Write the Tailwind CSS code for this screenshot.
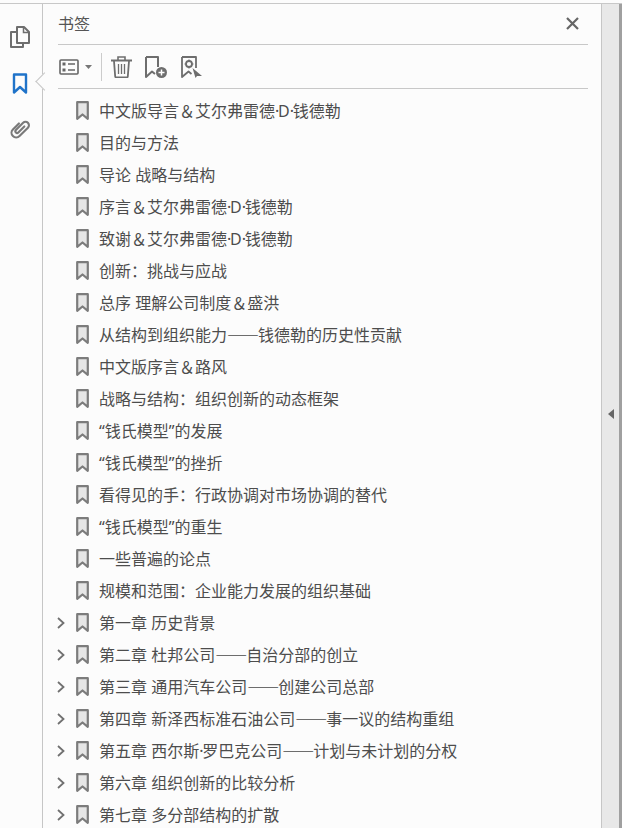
<!DOCTYPE html>
<html lang="zh-CN">
<head>
    <meta charset="UTF-8">
    <title>书签</title>
    <script src="https://cdn.jsdelivr.net/npm/@tailwindcss/browser@4"></script>
</head>
<body class="bg-[#fcfcfc] font-['Noto_Sans','Noto_Sans_CJK_SC',sans-serif] text-[#4d4d4d]">
    <div class="flex h-[828px] w-[622px] overflow-hidden pt-[3px]">
        <div class="flex w-full border-t border-[#c8c8c8]">
            <!-- left rail -->
            <div class="relative flex w-[43px] shrink-0 flex-col items-center border-r border-[#c6c6c6] pt-[21px] pr-[3px]">
                <svg class="h-[24px] w-[22px]" viewBox="0 0 22 24" fill="none" stroke="#6e6e6e" stroke-width="2">
                    <path d="M8 2h7l5 5v11H8z" stroke-linejoin="round"/>
                    <path d="M14.5 2v5.5H20" stroke-width="1.5"/>
                    <path d="M8 7H2v15h12v-4" stroke-linejoin="round"/>
                </svg>
                <svg class="mt-[24px] h-[22px] w-[16px]" viewBox="0 0 16 22" fill="none" stroke="#1f73c9" stroke-width="2.4">
                    <path d="M2 1.500h12v18l-6-5.500-6 5.500z" stroke-linejoin="round"/>
                </svg>
                <svg class="mt-[22px] h-[24px] w-[22px]" viewBox="0 0 22 24" fill="none" stroke="#7a7a7a" stroke-width="2.500" stroke-linecap="round">
                    <path transform="translate(11 12) rotate(45) scale(.85) translate(1.500 -.7)" d="M0-5V5a2 2 0 0 1-4 0V-7a4 4 0 0 1 8 0V7a5.500 5.500 0 0 1-11 0V-3"/>
                </svg>
                <!-- pointer of the active tab -->
                <div class="absolute top-[71px] right-[-9px] h-[13px] w-[13px] rotate-45 border-b border-l border-[#c6c6c6] bg-[#fcfcfc]"></div>
            </div>

            <!-- bookmarks panel -->
            <div class="flex min-w-0 flex-1 flex-col">
                <div class="mr-[13px] ml-[15px] flex h-[41px] shrink-0 items-center justify-between border-b border-[#c8c8c8]">
                    <span class="text-[16px] leading-[24px] text-[#555555]">书签</span>
                    <svg class="mr-[9px] mb-[2px] h-[13px] w-[13px]" viewBox="0 0 13 13" stroke="#666666" stroke-width="2.200">
                        <path d="M1 1l11 11M12 1L1 12"/>
                    </svg>
                </div>

                <div class="mr-[13px] ml-[15px] flex h-[44px] shrink-0 items-center border-b border-[#c8c8c8] pl-px">
                    <svg class="h-[16px] w-[20px]" viewBox="0 0 20 16" fill="none" stroke="#666666" stroke-width="1.600">
                        <rect x="1" y="1" width="18" height="14" rx="1"/>
                        <rect x="3.500" y="3.500" width="3" height="3" fill="#666666" stroke="none"/>
                        <rect x="3.500" y="9.500" width="3" height="3" fill="#666666" stroke="none"/>
                        <path d="M9 5h7M9 11h7"/>
                    </svg>
                    <svg class="ml-[6px] h-[4px] w-[7px]" viewBox="0 0 7 4" fill="#777777"><path d="M0 0h7L3.500 4z"/></svg>
                    <div class="mx-[9px] h-[28px] w-px bg-[#cccccc]"></div>
                    <svg class="h-[22px] w-[21px]" viewBox="0 0 21 22" fill="none" stroke="#6e6e6e" stroke-width="1.600">
                        <path d="M0 4.500h21" stroke-width="2"/>
                        <path d="M7 4V1h7V4"/>
                        <path d="M3 5l1.200 15.500q.1 1 1 1h10.600q.9 0 1-1L18 5" stroke-width="1.800"/>
                        <path d="M7.500 8v10M10.500 8v10M13.500 8v10" stroke-width="1.300"/>
                    </svg>
                    <svg class="ml-[13px] h-[22px] w-[22px]" viewBox="0 0 22 22" fill="none" stroke="#6e6e6e" stroke-width="2">
                        <path d="M1 1h12v10M1 1v20l6-5.500 3 2.500" stroke-linejoin="round"/>
                        <circle cx="16.500" cy="16.500" r="5.500" fill="#6e6e6e" stroke="none"/>
                        <path d="M13.500 16.500h6M16.500 13.500v6" stroke="#ffffff" stroke-width="1.500"/>
                    </svg>
                    <svg class="ml-[14px] h-[22px] w-[21px]" viewBox="0 0 21 22" fill="none" stroke="#6e6e6e" stroke-width="1.800">
                        <path d="M1 1h14v11M1 1v20l6.500-5.500 3 2.500" stroke-linejoin="round"/>
                        <circle cx="8" cy="8" r="3"/>
                        <path d="M8 3.500V5M8 11v1.500M3.500 8H5M11 8h1.500" stroke-width="1.200"/>
                        <path d="M11.500 12l9.500 8h-5l-1.500 2z" fill="#6e6e6e" stroke="none"/>
                    </svg>
                </div>

                <!-- bookmark rows -->
                <ul id="tree" class="pt-[6px]"></ul>
            </div>

            <!-- collapsed right pane -->
            <div class="flex w-[18px] shrink-0 items-center border-l border-[#c6c6c6] bg-[#e8e8e8] pb-[4px] pl-[6px]">
                <svg class="h-[10px] w-[6px]" viewBox="0 0 6 10" fill="#666666"><path d="M6 0v10L0 5z"/></svg>
            </div>
            <div class="w-[3px] shrink-0 bg-[#a0a0a0]"></div>
        </div>
    </div>

    <script>
        const items = [
            ["中文版导言＆艾尔弗雷德·D·钱德勒", false],
            ["目的与方法", false],
            ["导论 战略与结构", false],
            ["序言＆艾尔弗雷德·D·钱德勒", false],
            ["致谢＆艾尔弗雷德·D·钱德勒", false],
            ["创新：挑战与应战", false],
            ["总序 理解公司制度＆盛洪", false],
            ["从结构到组织能力——钱德勒的历史性贡献", false],
            ["中文版序言＆路风", false],
            ["战略与结构：组织创新的动态框架", false],
            ["“钱氏模型”的发展", false],
            ["“钱氏模型”的挫折", false],
            ["看得见的手：行政协调对市场协调的替代", false],
            ["“钱氏模型”的重生", false],
            ["一些普遍的论点", false],
            ["规模和范围：企业能力发展的组织基础", false],
            ["第一章 历史背景", true],
            ["第二章 杜邦公司——自治分部的创立", true],
            ["第三章 通用汽车公司——创建公司总部", true],
            ["第四章 新泽西标准石油公司——事一议的结构重组", true],
            ["第五章 西尔斯·罗巴克公司——计划与未计划的分权", true],
            ["第六章 组织创新的比较分析", true],
            ["第七章 多分部结构的扩散", true],
        ];

        // dashes and middle dots sit tighter in the reference font
        const tighten = title => title
            .replace(/——/g, `<span class="font-['Noto_Sans_CJK_SC'] leading-none tracking-[-1px]">——</span>`)
            .replace(/·/g, `<span class="tracking-[-1.3px]">·</span>`);

        const tree = document.getElementById("tree");
        items.forEach(([title, hasChildren]) => {
            const row = document.createElement("li");
            row.className = "flex h-[32px] items-center";
            const arrow = hasChildren
                ? `<svg class="ml-[14px] h-[12px] w-[8px]" viewBox="0 0 8 12" fill="none" stroke="#707070" stroke-width="1.800"><path d="M1 1l5.500 5L1 11"/></svg>`
                : `<span class="ml-[14px] w-[8px]"></span>`;
            row.innerHTML = `${arrow}
                <svg class="ml-[11px] h-[20px] w-[13px]" viewBox="0 0 13 20" fill="#e6e6e6" stroke="#7c7c7c" stroke-width="2.200"><path d="M1.200 1.200h10.600v16.600l-5.300-4.300-5.300 4.300z" stroke-linejoin="round"/></svg>
                <span class="ml-[10px] whitespace-nowrap text-[16px] leading-[24px]">${tighten(title)}</span>`;
            tree.appendChild(row);
        });
    </script>
</body>
</html>
